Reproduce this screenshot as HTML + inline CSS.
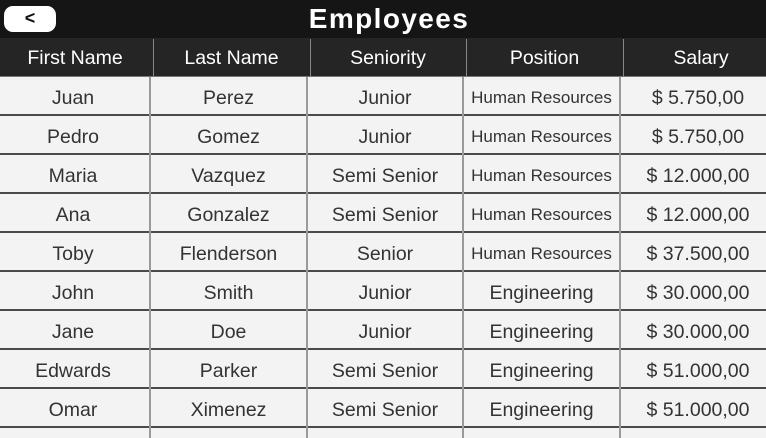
<!DOCTYPE html>
<html><head><style>
*{margin:0;padding:0;box-sizing:border-box}
body{width:766px;height:438px;overflow:hidden;background:#f3f3f3;font-family:"Liberation Sans",sans-serif;position:relative}
.top{position:absolute;left:0;top:0;width:766px;height:38px;background:#151515}
.back{position:absolute;left:4px;top:6px;width:52px;height:26px;background:#fff;border-radius:9px;color:#111;font-size:18px;font-weight:bold;text-align:center;line-height:24px}
.title{position:absolute;left:0;width:778px;top:3px;text-align:center;color:#fff;font-weight:bold;font-size:28px;letter-spacing:1.4px}
.hdr{position:absolute;top:38px;left:0;width:766px;height:39px;background:#252525;border-bottom:1px solid #777}
.hdr div{position:absolute;top:1px;height:38px;line-height:38px;text-align:center;color:#fff;font-size:19.5px}
.hv{position:absolute;top:39px;width:1px;height:37px;background:#888}
.row{position:absolute;left:0;width:766px;height:39px;border-bottom:2px solid #4a4a4a}
.row div{position:absolute;top:2px;height:37px;line-height:38px;text-align:center;color:#333;font-size:19.5px}
.row div.s{font-size:17px}
.row div:last-child{padding-left:10px}
.bv{position:absolute;top:77px;width:2px;height:361px;background:#9a9a9a}
</style></head><body>
<div class="top"><div class="back">&lt;</div><div class="title">Employees</div></div>
<div class="hdr">
<div style="left:0;width:150px">First Name</div>
<div style="left:153px;width:157px">Last Name</div>
<div style="left:310px;width:156px">Seniority</div>
<div style="left:466px;width:157px">Position</div>
<div style="left:623px;width:156px">Salary</div>
</div>
<div class="hv" style="left:153px"></div><div class="hv" style="left:310px"></div><div class="hv" style="left:466px"></div><div class="hv" style="left:623px"></div>

<div class="row" style="top:77px"><div style="left:0;width:146px">Juan</div><div style="left:150px;width:157px">Perez</div><div style="left:307px;width:156px">Junior</div><div class="s" style="left:463px;width:157px">Human Resources</div><div style="left:620px;width:146px">$ 5.750,00</div></div>
<div class="row" style="top:116px"><div style="left:0;width:146px">Pedro</div><div style="left:150px;width:157px">Gomez</div><div style="left:307px;width:156px">Junior</div><div class="s" style="left:463px;width:157px">Human Resources</div><div style="left:620px;width:146px">$ 5.750,00</div></div>
<div class="row" style="top:155px"><div style="left:0;width:146px">Maria</div><div style="left:150px;width:157px">Vazquez</div><div style="left:307px;width:156px">Semi Senior</div><div class="s" style="left:463px;width:157px">Human Resources</div><div style="left:620px;width:146px">$ 12.000,00</div></div>
<div class="row" style="top:194px"><div style="left:0;width:146px">Ana</div><div style="left:150px;width:157px">Gonzalez</div><div style="left:307px;width:156px">Semi Senior</div><div class="s" style="left:463px;width:157px">Human Resources</div><div style="left:620px;width:146px">$ 12.000,00</div></div>
<div class="row" style="top:233px"><div style="left:0;width:146px">Toby</div><div style="left:150px;width:157px">Flenderson</div><div style="left:307px;width:156px">Senior</div><div class="s" style="left:463px;width:157px">Human Resources</div><div style="left:620px;width:146px">$ 37.500,00</div></div>
<div class="row" style="top:272px"><div style="left:0;width:146px">John</div><div style="left:150px;width:157px">Smith</div><div style="left:307px;width:156px">Junior</div><div style="left:463px;width:157px">Engineering</div><div style="left:620px;width:146px">$ 30.000,00</div></div>
<div class="row" style="top:311px"><div style="left:0;width:146px">Jane</div><div style="left:150px;width:157px">Doe</div><div style="left:307px;width:156px">Junior</div><div style="left:463px;width:157px">Engineering</div><div style="left:620px;width:146px">$ 30.000,00</div></div>
<div class="row" style="top:350px"><div style="left:0;width:146px">Edwards</div><div style="left:150px;width:157px">Parker</div><div style="left:307px;width:156px">Semi Senior</div><div style="left:463px;width:157px">Engineering</div><div style="left:620px;width:146px">$ 51.000,00</div></div>
<div class="row" style="top:389px"><div style="left:0;width:146px">Omar</div><div style="left:150px;width:157px">Ximenez</div><div style="left:307px;width:156px">Semi Senior</div><div style="left:463px;width:157px">Engineering</div><div style="left:620px;width:146px">$ 51.000,00</div></div>

<div class="bv" style="left:149px"></div><div class="bv" style="left:306px"></div><div class="bv" style="left:462px"></div><div class="bv" style="left:619px"></div>
</body></html>
